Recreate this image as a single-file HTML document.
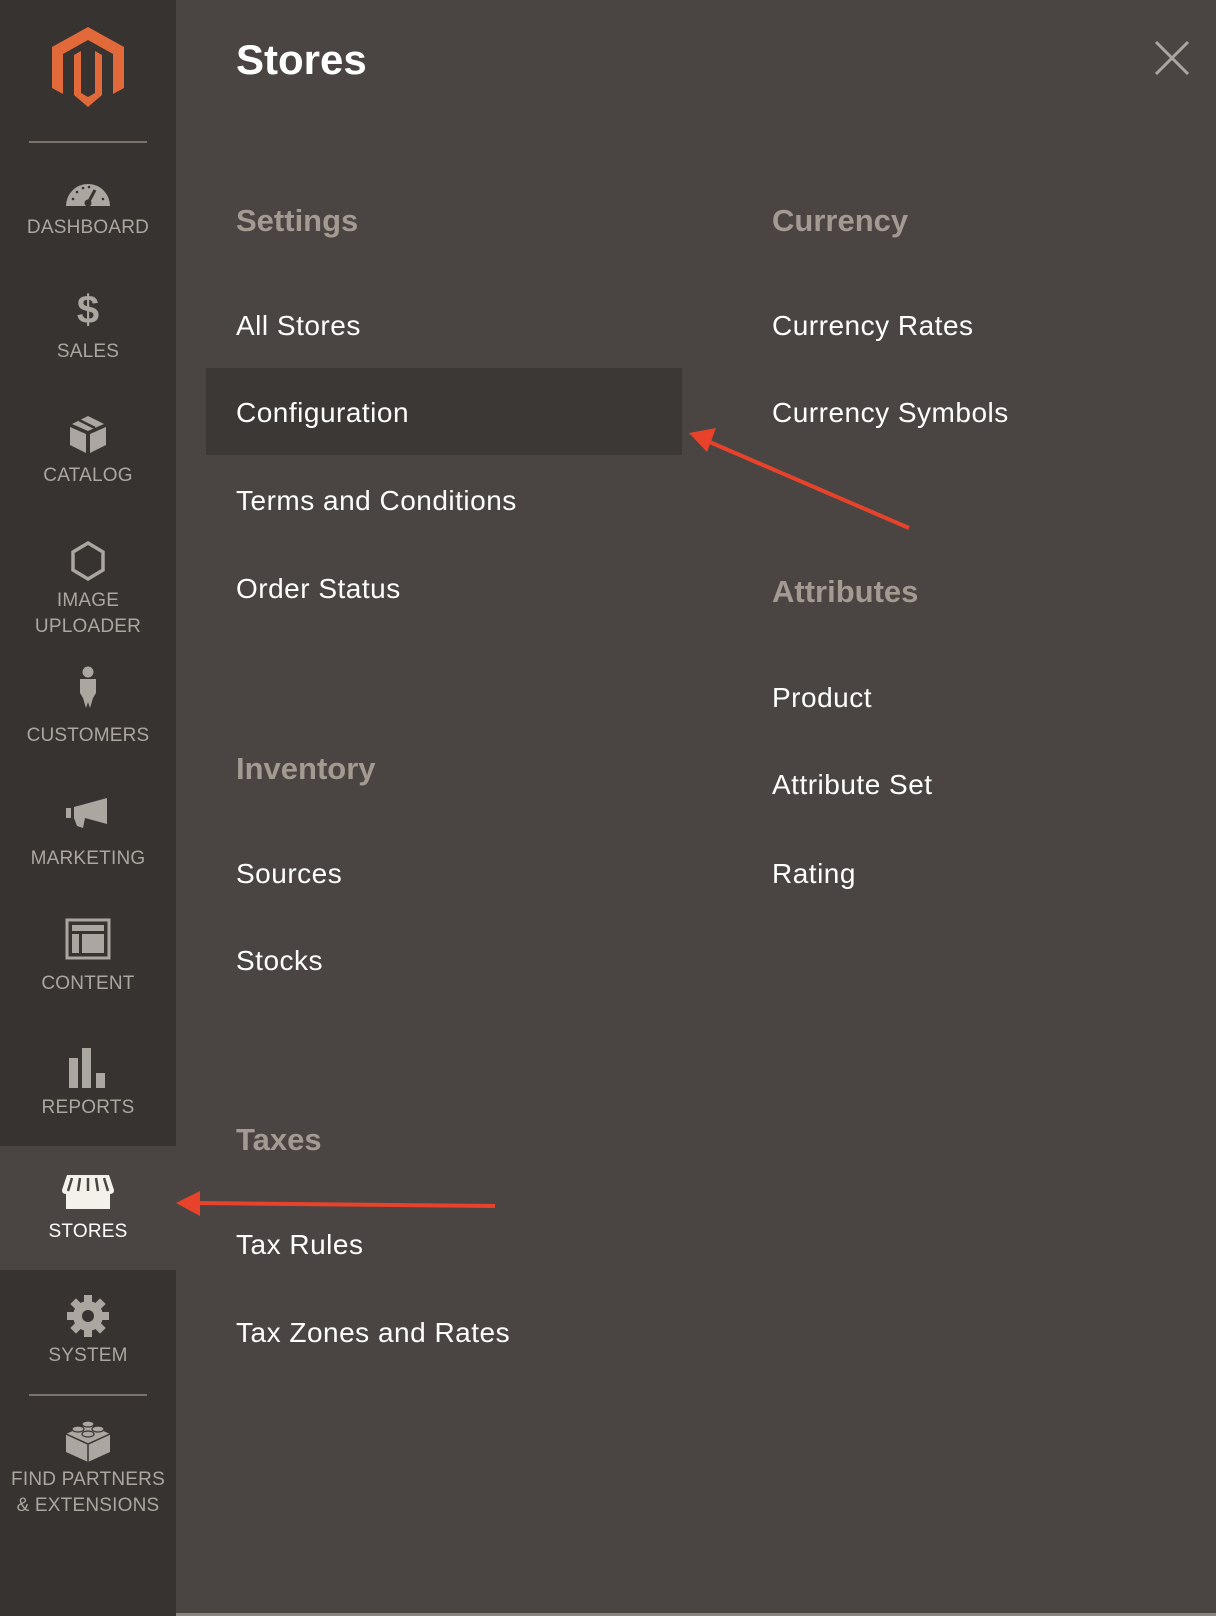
<!DOCTYPE html>
<html><head><meta charset="utf-8"><style>
*{margin:0;padding:0;box-sizing:border-box}
body{width:1216px;height:1616px;background:#4a4542;font-family:"Liberation Sans",sans-serif;position:relative;overflow:hidden}
#side{position:absolute;left:0;top:0;width:176px;height:1616px;background:#373330}
.act{position:absolute;left:0;top:1146px;width:176px;height:124px;background:#4a4542}
.hr{position:absolute;left:29px;width:118px;height:2px;background:#7a726c}
.lbl{position:absolute;left:0;width:176px;text-align:center;color:#aba69f;font-size:19px;line-height:26px;letter-spacing:0.2px}
.ic{position:absolute;left:58px;width:60px;height:44px}
.t{position:absolute;color:#fff;font-size:28px;line-height:36px;white-space:nowrap;letter-spacing:0.5px}
.h{position:absolute;color:#a39a92;font-size:31px;font-weight:bold;line-height:40px;white-space:nowrap}
</style></head><body>
<div id="side">
<div class="act"></div>
<svg style="position:absolute;left:52px;top:27px" width="72" height="81" viewBox="0 0 72 81"><path fill="#e2693a" d="M36 0 L72 20 L72 61 L61 67 L61 27 L36 13 L11 27 L11 67 L0 61 L0 20Z M36 20 L50 28 L50 68 L36 80 L22 68 L22 28 L29 24 L29 66 L36 70 L43 66 L43 24Z"/></svg>
<div class="hr" style="top:141px"></div>
<svg class="ic" style="top:172px" viewBox="0 0 60 44"><path fill="#aba69f" d="M8 34 A22 22 0 0 1 52 34 Z"/><path stroke="#373330" stroke-width="3" d="M30 31 L37 18"/><circle cx="30" cy="31" r="3.5" fill="#373330"/><g fill="#373330"><circle cx="15" cy="27" r="1.3"/><circle cx="19" cy="20" r="1.3"/><circle cx="25" cy="16" r="1.3"/><circle cx="31" cy="15" r="1.3"/><circle cx="45" cy="27" r="1.3"/></g></svg>
<div class="lbl" style="top:215px">DASHBOARD</div>
<div style="position:absolute;left:0;width:176px;top:288px;text-align:center;color:#aba69f;font-size:40px;font-weight:bold;line-height:44px">$</div>
<div class="lbl" style="top:339px">SALES</div>
<svg class="ic" style="top:412px" viewBox="0 0 60 44"><path fill="#aba69f" d="M30 4 L46 12 L30 19 L14 12Z M12 15 L28 22 L28 41 L12 33Z M32 22 L48 15 L48 33 L32 41Z"/><path stroke="#373330" stroke-width="2.5" d="M21 8 L37 16"/></svg>
<div class="lbl" style="top:463px">CATALOG</div>
<svg class="ic" style="top:540px" viewBox="0 0 60 44"><path fill="none" stroke="#aba69f" stroke-width="3.5" d="M30 3 L45 12 L45 30 L30 39 L15 30 L15 12Z"/></svg>
<div class="lbl" style="top:588px">IMAGE<br>UPLOADER</div>
<svg class="ic" style="top:666px" viewBox="0 0 60 44"><circle cx="30" cy="6" r="5.5" fill="#aba69f"/><path fill="#aba69f" d="M22 13 L38 13 L38 27 L35 32 L32 42 L30 36 L28 42 L25 32 L22 27Z"/></svg>
<div class="lbl" style="top:723px">CUSTOMERS</div>
<svg class="ic" style="top:798px" viewBox="0 0 60 44"><path fill="#aba69f" d="M8 10 L13 10 L13 20 L8 20Z M16 9 L49 0 L49 26 L27 20 L25 30 L19 28 L16 20Z"/></svg>
<div class="lbl" style="top:846px">MARKETING</div>
<svg class="ic" style="top:918px" viewBox="0 0 60 44"><path fill="none" stroke="#aba69f" stroke-width="3" d="M9 2 H51 V40 H9Z"/><path fill="#aba69f" d="M14 7 H46 V13 H14Z M14 16 H21 V35 H14Z M24 16 H46 V35 H24Z"/></svg>
<div class="lbl" style="top:971px">CONTENT</div>
<svg class="ic" style="top:1046px" viewBox="0 0 60 44"><path fill="#aba69f" d="M11 12 H20 V42 H11Z M24 2 H33 V42 H24Z M38 27 H47 V42 H38Z"/></svg>
<div class="lbl" style="top:1095px">REPORTS</div>
<svg class="ic" style="top:1172px" viewBox="0 0 60 44"><path fill="#f4f1ea" d="M9 3 H51 L56 18 Q56 22 52 22 L52 37 H8 L8 22 Q4 22 4 18Z"/><path stroke="#4a4542" stroke-width="2.5" d="M10 19 L14 6 M20 19 L22 6 M30 19 L30 6 M40 19 L38 6 M50 19 L46 6"/></svg>
<div class="lbl" style="top:1219px;color:#fff">STORES</div>
<svg class="ic" style="top:1294px" viewBox="0 0 60 44"><g fill="#aba69f"><circle cx="30" cy="22" r="15"/><rect x="26" y="1" width="8" height="42"/><rect x="9" y="18" width="42" height="8"/><rect x="26" y="1" width="8" height="42" transform="rotate(45 30 22)"/><rect x="26" y="1" width="8" height="42" transform="rotate(-45 30 22)"/></g><circle cx="30" cy="22" r="6" fill="#373330"/></svg>
<div class="lbl" style="top:1343px">SYSTEM</div>
<div class="hr" style="top:1394px"></div>
<svg class="ic" style="top:1418px" viewBox="0 0 60 44"><path fill="#aba69f" d="M30 6 L52 16 L52 34 L30 44 L8 34 L8 16Z"/><path fill="none" stroke="#373330" stroke-width="1.5" d="M8 16 L30 26 L52 16 M30 26 V44"/><g fill="#aba69f" stroke="#373330" stroke-width="1.2"><ellipse cx="30" cy="6" rx="6" ry="3"/><ellipse cx="20" cy="11" rx="6" ry="3"/><ellipse cx="40" cy="11" rx="6" ry="3"/><ellipse cx="30" cy="16" rx="6" ry="3"/></g></svg>
<div class="lbl" style="top:1467px">FIND PARTNERS<br>&amp; EXTENSIONS</div>
</div>
<div style="position:absolute;left:176px;top:1613px;width:1040px;height:3px;background:#8a847f"></div>

<div style="position:absolute;left:236px;top:34px;color:#fff;font-size:42px;font-weight:bold;line-height:52px">Stores</div>
<svg style="position:absolute;left:1154px;top:40px" width="36" height="36"><path stroke="#aba69f" stroke-width="3" d="M2 2 L34 34 M34 2 L2 34"/></svg>

<div style="position:absolute;left:206px;top:368px;width:476px;height:87px;background:#3c3835"></div>
<div class="h" style="left:236px;top:201px">Settings</div>
<div class="t" style="left:236px;top:308px">All Stores</div>
<div class="t" style="left:236px;top:395px">Configuration</div>
<div class="t" style="left:236px;top:483px">Terms and Conditions</div>
<div class="t" style="left:236px;top:571px">Order Status</div>
<div class="h" style="left:236px;top:749px">Inventory</div>
<div class="t" style="left:236px;top:856px">Sources</div>
<div class="t" style="left:236px;top:943px">Stocks</div>
<div class="h" style="left:236px;top:1120px">Taxes</div>
<div class="t" style="left:236px;top:1227px">Tax Rules</div>
<div class="t" style="left:236px;top:1315px">Tax Zones and Rates</div>

<div class="h" style="left:772px;top:201px">Currency</div>
<div class="t" style="left:772px;top:308px">Currency Rates</div>
<div class="t" style="left:772px;top:395px">Currency Symbols</div>
<div class="h" style="left:772px;top:572px">Attributes</div>
<div class="t" style="left:772px;top:680px">Product</div>
<div class="t" style="left:772px;top:767px">Attribute Set</div>
<div class="t" style="left:772px;top:856px">Rating</div>

<svg style="position:absolute;left:0;top:0" width="1216" height="1616">
<path stroke="#e8432a" stroke-width="4" d="M909 528 L705 440"/><path fill="#e8432a" d="M689 433 L716 428 L707 452Z"/>
<path stroke="#e8432a" stroke-width="4" d="M495 1206 L195 1203"/><path fill="#e8432a" d="M176 1203 L200 1191 L200 1216Z"/>
</svg>
</body></html>
